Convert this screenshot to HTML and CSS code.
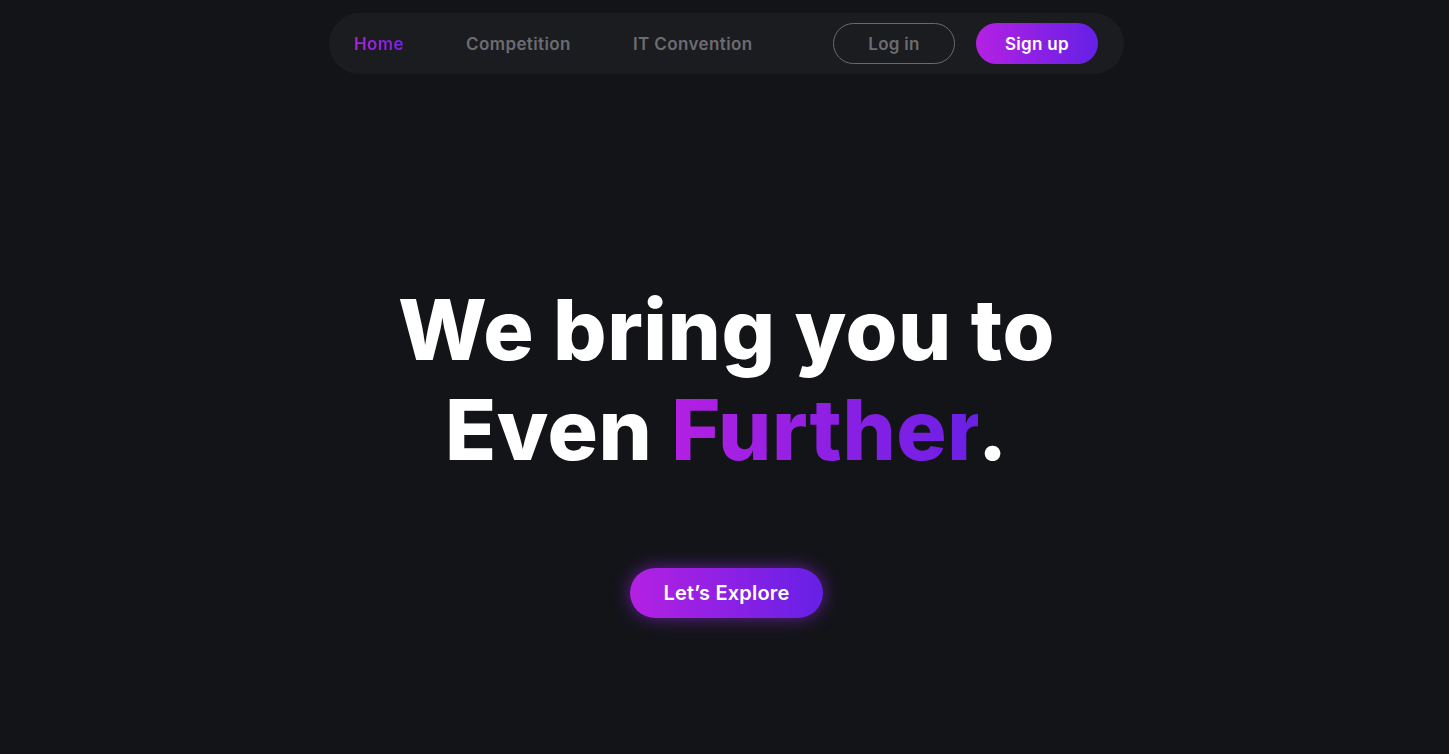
FILE: index.html
```html
<!DOCTYPE html>
<html lang="en">
<head>
<meta charset="utf-8">
<title>Even Further</title>
<link rel="stylesheet" href="styles.css">
</head>
<body>
<div class="page">
  <header class="nav-wrap">
    <nav class="nav">
      <ul class="links">
        <li><a class="link active" href="#">Home</a></li>
        <li><a class="link" href="#">Competition</a></li>
        <li><a class="link" href="#">IT Convention</a></li>
      </ul>
      <div class="actions">
        <a class="btn btn-outline" href="#">Log in</a>
        <a class="btn btn-grad" href="#">Sign up</a>
      </div>
    </nav>
  </header>
  <main class="hero">
    <h1 class="title">We bring you to<br>Even <span class="grad-text">Further</span>.</h1>
    <a class="cta" href="#">Let’s Explore</a>
  </main>
</div>
</body>
</html>
```

FILE: styles.css
```css
* { box-sizing: border-box; }
html, body { margin: 0; padding: 0; }
body {
  background: #131418;
  font-family: "Inter", "Noto Sans", sans-serif;
  color: #fff;
  height: 754px;
  overflow: hidden;
}
a { text-decoration: none; }
.page {
  display: flex;
  flex-direction: column;
  align-items: center;
  padding-left: 4px;
}
.nav-wrap { padding-top: 13px; }
.nav {
  width: 795px;
  height: 61px;
  background: #1b1c20;
  border-radius: 31px;
  display: flex;
  align-items: center;
  justify-content: space-between;
  padding: 0 26px 0 25px;
}
.links { list-style: none; margin: 0; padding: 0; display: flex; gap: 62px; }
.link {
  font-size: 17px;
  font-weight: 600;
  letter-spacing: 0.4px;
  color: #6b6c72;
}
.link.active {
  background: linear-gradient(90deg, #b01fe3, #7a20e6);
  -webkit-background-clip: text;
  background-clip: text;
  color: transparent;
}
.actions { display: flex; gap: 21px; }
.btn {
  width: 122px;
  height: 41px;
  border-radius: 21px;
  display: flex;
  align-items: center;
  justify-content: center;
  font-size: 17px;
  font-weight: 600;
  letter-spacing: 0.3px;
}
.btn-outline { border: 1px solid #6a6b70; color: #6b6c72; }
.btn-grad { background: linear-gradient(90deg, #b421e2, #6520e6); color: #fff; }
.hero {
  display: flex;
  flex-direction: column;
  align-items: center;
  padding-top: 206px;
}
.title {
  margin: 0;
  text-align: center;
  font-size: 84px;
  line-height: 100px;
  font-weight: 800;
  letter-spacing: 0.5px;
}
.grad-text {
  background: linear-gradient(90deg, #b320e3, #6a20e4);
  -webkit-background-clip: text;
  background-clip: text;
  color: transparent;
}
.cta {
  margin-top: 88px;
  width: 193px;
  height: 50px;
  border-radius: 25px;
  background: linear-gradient(90deg, #b421e2, #6620e6);
  box-shadow: 0 0 18px rgba(150, 40, 230, 0.6);
  color: #fff;
  font-size: 20px;
  font-weight: 600;
  letter-spacing: 0.2px;
  display: flex;
  align-items: center;
  justify-content: center;
}
```
